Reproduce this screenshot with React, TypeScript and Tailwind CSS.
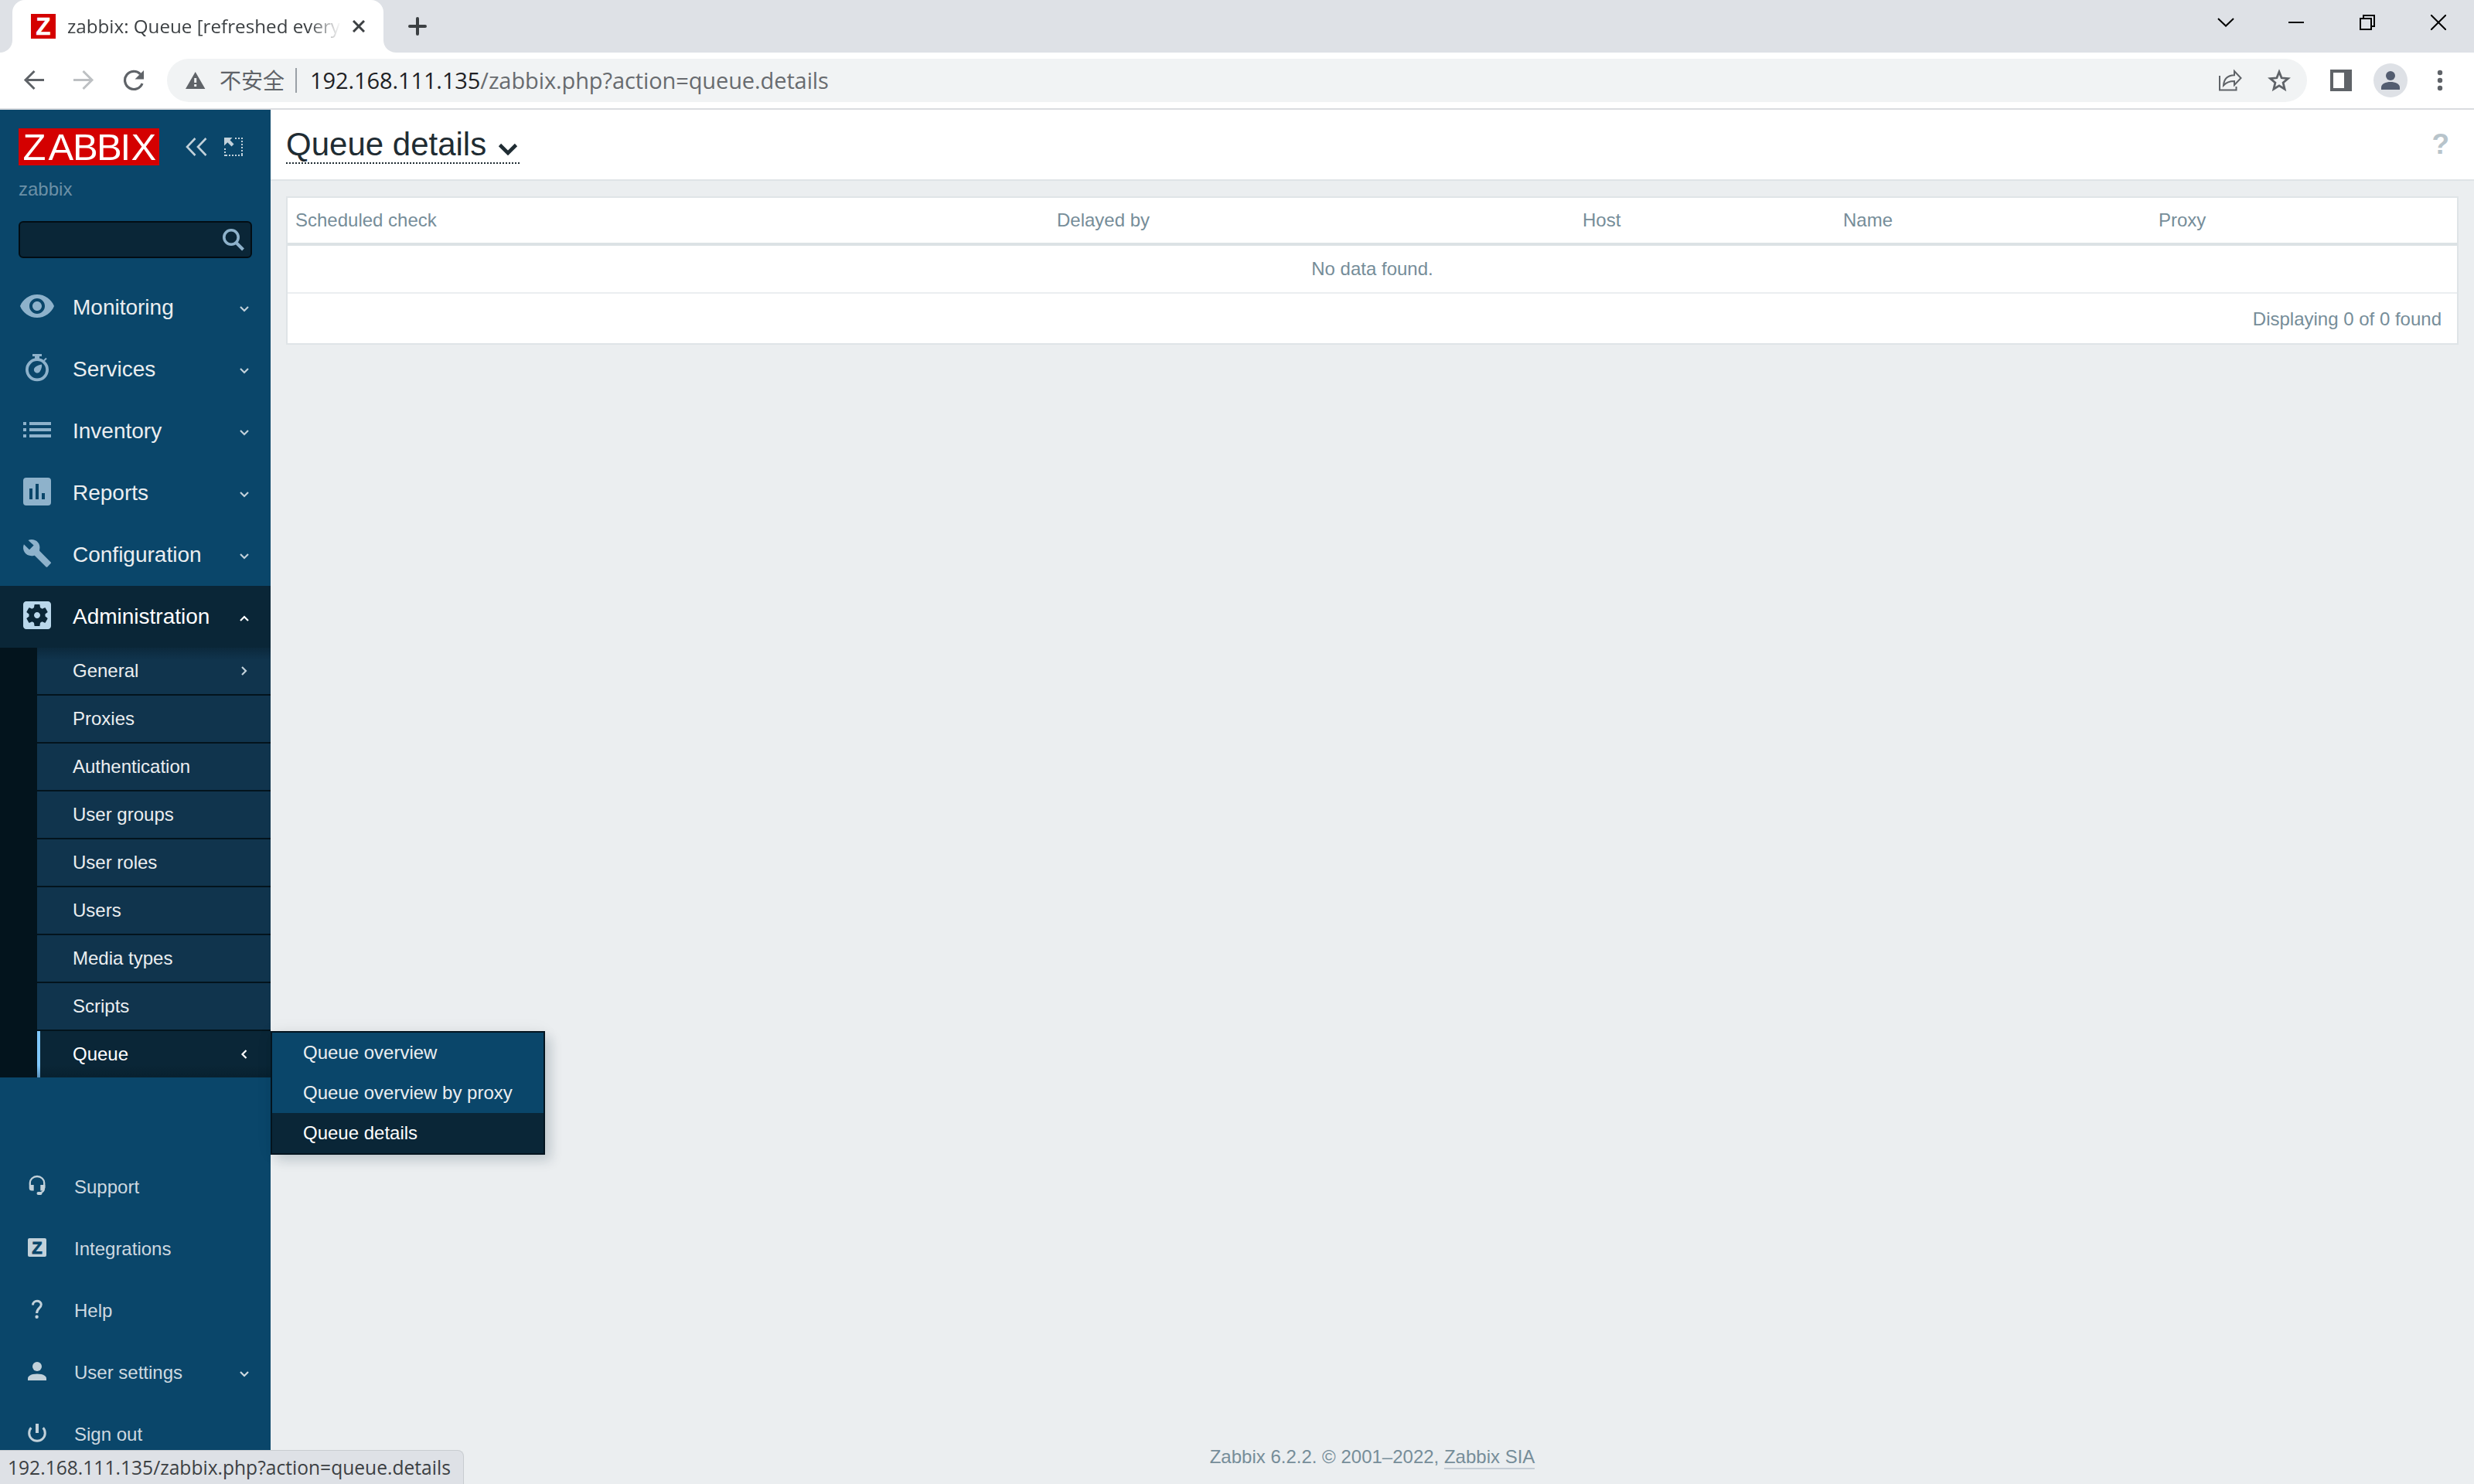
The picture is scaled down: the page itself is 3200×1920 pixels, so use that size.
import type { ReactNode } from "react";

const SEGOE = "font-['Open_Sans','Noto_Sans_CJK_SC',sans-serif]";

/* ---------- icons ---------- */

function Chevron({ dir = "down", className = "" }: { dir?: "down" | "up" | "left" | "right"; className?: string }) {
  const d = {
    down: "M3 6l5 5 5-5",
    up: "M3 11l5-5 5 5",
    right: "M5 3l5 5-5 5",
    left: "M10.500 3l-5 5 5 5",
  }[dir];
  return (
    <svg className={`w-4 h-4 shrink-0 ${className}`} viewBox="0 0 16 16" fill="none" stroke="currentColor" strokeWidth="2.2">
      <path d={d} />
    </svg>
  );
}

function MenuIcon({ children }: { children: ReactNode }) {
  return (
    <svg className="w-12 h-12 mb-1 shrink-0" viewBox="0 0 48 48" fill="currentColor" fillRule="evenodd">
      {children}
    </svg>
  );
}

const icons = {
  monitoring: (
    <path transform="scale(2)" d="M12 4.5C7 4.5 2.73 7.61 1 12c1.73 4.39 6 7.5 11 7.5s9.27-3.11 11-7.5c-1.73-4.39-6-7.5-11-7.5zM12 17c-2.76 0-5-2.24-5-5s2.24-5 5-5 5 2.24 5 5-2.24 5-5 5zm0-8c-1.66 0-3 1.34-3 3s1.34 3 3 3 3-1.34 3-3-1.34-3-3-3z" />
  ),
  services: (
    <>
      <circle cx="24" cy="26.3" r="13.1" fill="none" stroke="currentColor" strokeWidth="3.8" />
      <path d="M18 6h12v3h-3v3.5h-6V9h-3z" />
      <path d="M33 14.5l3-3" fill="none" stroke="currentColor" strokeWidth="2" />
      <path d="M30 19.5c.6 3-.6 6.300-2.300 9a4.200 4.200 0 1 1-6.200-5.400c2.300-1.800 5.200-3.400 8.500-3.600z" />
    </>
  ),
  inventory: <path d="M6 14h4v4H6zM14 14h28v4H14zM6 22h4v4H6zM14 22h28v4H14zM6 30h4v4H6zM14 30h28v4H14z" />,
  reports: (
    <path d="M10 6h28a4 4 0 0 1 4 4v28a4 4 0 0 1-4 4H10a4 4 0 0 1-4-4V10a4 4 0 0 1 4-4zM14 20v14h4V20zM22 14v20h4V14zM30 26v8h4v-8z" />
  ),
  configuration: (
    <path d="M12.500 7C20 3.800 29.500 9.500 27.100 19.500c-.1.600-.1 1.200.3 1.600L41.500 35.200c.7.700.7 1.200 0 1.900l-4.200 4.300c-.6.600-1.100.6-1.700 0L21.300 27.200c-.5-.5-1-.5-1.700-.3C10.500 29 3.500 20.500 6.900 12.300l7.100 6.900 5.600-5.600z" />
  ),
  administration: (
    <path transform="scale(2)" d="M12 10c-1.100 0-2 .9-2 2s.9 2 2 2 2-.9 2-2-.9-2-2-2zm7-7H5c-1.110 0-2 .9-2 2v14c0 1.100.890 2 2 2h14c1.110 0 2-.9 2-2V5c0-1.100-.890-2-2-2zm-1.750 9c0 .230-.020.460-.050.680l1.480 1.160c.130.110.170.300.080.450l-1.400 2.420c-.090.150-.270.210-.430.150l-1.740-.700c-.360.280-.760.510-1.180.690l-.260 1.850c-.030.170-.180.300-.350.300h-2.800c-.170 0-.320-.130-.350-.290l-.260-1.850c-.430-.180-.820-.410-1.180-.690l-1.740.700c-.160.060-.340 0-.430-.150l-1.400-2.420c-.090-.150-.050-.340.080-.450l1.480-1.160c-.030-.230-.050-.460-.050-.690s.020-.460.050-.680l-1.480-1.160c-.130-.110-.170-.300-.080-.450l1.400-2.420c.090-.150.270-.210.430-.150l1.740.700c.360-.280.760-.510 1.180-.690l.260-1.850c.030-.170.180-.300.350-.300h2.800c.170 0 .320.130.350.290l.260 1.850c.430.180.820.410 1.180.690l1.740-.700c.160-.060.340 0 .430.150l1.400 2.420c.090.150.050.340-.080.450l-1.480 1.160c.030.230.050.460.050.690z" />
  ),
  support: (
    <>
      <path d="M14.800 23v-2.500a9.200 8.500 0 0 1 18.400 0V26c0 5-3 7.500-7.500 8" fill="none" stroke="currentColor" strokeWidth="2.300" />
      <path d="M13.700 23h6v7.500h-2.500a3.500 3.500 0 0 1-3.500-3.500zM34.300 23h-6v7.500h3.500l2.500-3.500z" />
      <rect x="23.500" y="32" width="7" height="4" rx="2" />
    </>
  ),
  integrations: (
    <>
      <rect x="12" y="12" width="24" height="24" rx="2" />
      <text x="24" y="31.800" textAnchor="middle" fill="#0a466a" stroke="#0a466a" strokeWidth="0.800" className="font-['Liberation_Sans',sans-serif] text-[22px] font-bold">Z</text>
    </>
  ),
  help: (
    <>
      <path d="M18.500 18.500c0-7 10.800-6.500 10.800-.8 0 4.600-5.700 5-5.700 11.300" fill="none" stroke="currentColor" strokeWidth="3" />
      <circle cx="23.600" cy="33.800" r="2.200" />
    </>
  ),
  user: (
    <>
      <circle cx="24" cy="18" r="6" />
      <path d="M12 36v-2.500c0-3.700 5.500-5.900 12-5.900s12 2.200 12 5.900V36z" />
    </>
  ),
  signout: (
    <>
      <path d="M22 12h4v12h-4z" />
      <path d="M16.300 17.200a10.300 10.300 0 1 0 15.400 0" fill="none" stroke="currentColor" strokeWidth="3" />
    </>
  ),
};

/* ---------- data ---------- */

const mainMenu = [
  { label: "Monitoring", icon: icons.monitoring },
  { label: "Services", icon: icons.services },
  { label: "Inventory", icon: icons.inventory },
  { label: "Reports", icon: icons.reports },
  { label: "Configuration", icon: icons.configuration },
];

const adminMenu = ["General", "Proxies", "Authentication", "User groups", "User roles", "Users", "Media types", "Scripts"];

const bottomMenu = [
  { label: "Support", icon: icons.support },
  { label: "Integrations", icon: icons.integrations },
  { label: "Help", icon: icons.help },
  { label: "User settings", icon: icons.user, arrow: true },
  { label: "Sign out", icon: icons.signout },
];

/* ---------- browser ---------- */

function TabStrip() {
  return (
    <div className="h-[68px] bg-[#dee1e6] flex shrink-0">
      <div className="w-4 bg-white"><div className="h-full bg-[#dee1e6] rounded-br-2xl" /></div>
      <div className="w-[480px] bg-[#dee1e6]">
        <div className="h-full bg-white rounded-t-2xl flex items-center pl-6">
          <svg className="w-8 h-8 shrink-0 overflow-visible" viewBox="0 0 32 32">
            <path fill="#d40000" d="M0 0h32v32H0z" />
            <text x="16" y="26.500" textAnchor="middle" fill="#fff" stroke="#fff" strokeWidth="0.600" className="font-['Liberation_Sans',sans-serif] text-[31px] font-bold">Z</text>
          </svg>
          <div className={`ml-[15px] w-[354px] whitespace-nowrap text-[24.2px] leading-9 text-[#3c4043] ${SEGOE} [mask-image:linear-gradient(to_right,#000_312px,transparent_354px)]`}>
            zabbix: Queue [refreshed every
          </div>
          <svg className="w-4 h-4 ml-[15px] shrink-0" viewBox="0 0 16 16" stroke="#3c4043" strokeWidth="3">
            <path d="M1 1l14 14M15 1L1 15" />
          </svg>
        </div>
      </div>
      <div className="w-4 bg-white"><div className="h-full bg-[#dee1e6] rounded-bl-2xl" /></div>
      <svg className="w-6 h-6 ml-4 mt-[22px]" viewBox="0 0 24 24" stroke="#3c4043" strokeWidth="4" strokeLinecap="round">
        <path d="M12 2v20M2 12h20" />
      </svg>
      <div className="ml-auto mr-9 flex gap-[72px] mt-[19px]">
        <svg className="w-5 h-5 overflow-visible" viewBox="0 0 20 20" fill="none" stroke="#000" strokeWidth="2"><path d="M1 5l10 9.500L21 5" /></svg>
        <svg className="w-5 h-5" viewBox="0 0 20 20"><path d="M0 9h20v2H0z" /></svg>
        <svg className="w-5 h-5" viewBox="0 0 20 20" fill="none" stroke="#000" strokeWidth="2"><path d="M1 5h14v14H1zM5 5V1h14v14h-4" /></svg>
        <svg className="w-5 h-5" viewBox="0 0 20 20" stroke="#000" strokeWidth="2"><path d="M0 0l20 20M20 0L0 20" /></svg>
      </div>
    </div>
  );
}

function Toolbar() {
  return (
    <div className="h-[74px] bg-white border-b-2 border-[#dadce0] flex items-center shrink-0">
      <svg className="w-7 h-7 ml-[30px]" viewBox="0 0 28 28" fill="none" stroke="#5f6368" strokeWidth="3">
        <path d="M27 13.500H3M14.500 2L3 13.500 14.500 25" />
      </svg>
      <svg className="w-7 h-7 ml-9" viewBox="0 0 28 28" fill="none" stroke="#bdc0c3" strokeWidth="3">
        <path d="M1 13.500h24M13.500 2L25 13.500 13.500 25" />
      </svg>
      <svg className="w-7 h-7 ml-[37px]" viewBox="0 0 28 28" fill="none" stroke="#5f6368" strokeWidth="3.200">
        <path d="M22.500 5.800A11.600 11.600 0 1 0 25 18" />
        <path d="M27 1v11.500H15.500z" fill="#5f6368" stroke="none" />
      </svg>
      <div className={`ml-[29px] w-[2768px] h-14 rounded-full bg-[#f1f3f4] flex items-center pl-6 ${SEGOE}`}>
        <svg className="w-[26px] h-[22px] shrink-0" viewBox="0 0 26 22" fill="#5f6368" fillRule="evenodd">
          <path d="M12.700 0L25.400 22H0zM11.200 8v6h3V8zM11.200 16v3h3v-3z" />
        </svg>
        <div className="ml-[18px] w-[98px] text-[28px] leading-10 text-[#5f6368] whitespace-nowrap">不安全</div>
        <div className="w-0.5 h-8 bg-[#9aa0a6]" />
        <div className="ml-[17px] text-[29px] leading-10 tracking-[-0.1px] text-[#202124] whitespace-nowrap">
          192.168.111.135<span className="text-[#686b6f]">/zabbix.php?action=queue.details</span>
        </div>
        <div className="ml-auto mr-5 flex items-center gap-8">
          <svg className="w-8 h-8" viewBox="0 0 32 32" fill="none" stroke="#5f6368" strokeWidth="2">
            <path d="M3 10v18.500h21.500V24" />
            <path d="M8 22.500c.5-8.500 5.500-13 14-13.300V4l8.500 9-8.500 9v-5c-6 0-10 1-14 5.500z" />
          </svg>
          <svg className="w-8 h-8" viewBox="0 0 32 32" fill="none" stroke="#5f6368" strokeWidth="2.800">
            <path d="M16 5l3.100 7.800 8.400.7-6.400 5.500 2 8.200L16 22.800l-7.100 4.400 2-8.200-6.400-5.500 8.400-.7z" />
          </svg>
        </div>
      </div>
      <svg className="w-7 h-7 ml-[30px]" viewBox="0 0 28 28" fill="#5f6368" fillRule="evenodd"><path d="M0 0h28v28H0zM4 4v20h14V4z" /></svg>
      <svg className="w-11 h-11 ml-7" viewBox="0 0 44 44" fill="#535d70">
        <circle cx="22" cy="22" r="22" fill="#dee1e6" />
        <circle cx="22" cy="16" r="6" />
        <path d="M10 34v-3c0-4.500 6-7 12-7s12 2.500 12 7v3z" />
      </svg>
      <svg className="w-2 h-7 ml-[38px]" viewBox="0 0 8 28" fill="#5f6368">
        <circle cx="4" cy="4" r="3.200" /><circle cx="4" cy="14" r="3.200" /><circle cx="4" cy="24" r="3.200" />
      </svg>
    </div>
  );
}

/* ---------- zabbix ---------- */

function SidebarHeader() {
  return (
    <div className="h-[216px] px-6 pt-6 shrink-0">
      <div className="flex items-center">
        <svg className="w-[182px] h-12 overflow-visible" viewBox="0 0 182 48">
          <path fill="#d40000" d="M0 0h182v48H0z" />
          <text x="5.500 38.500 70 101 131.500 145.500" y="41" fill="#fff" className="font-['Liberation_Sans',sans-serif] text-[49px]">ZABBIX</text>
        </svg>
        <svg className="w-7 h-6 ml-[34px]" viewBox="0 0 28 24" fill="none" stroke="#c2d1da" strokeWidth="2.600">
          <path d="M12.500 1L2 12l10.500 11M26.500 1L16 12l10.500 11" />
        </svg>
        <svg className="w-6 h-6 ml-[22px]" viewBox="0 0 24 24" fill="#c2d1da">
          <path d="M0 0h10.500L7.500 3.200l5 5.200-3 3-5.200-5.200L0 10.500z" />
          <path d="M14 0h2v2h-2zM18 0h2v2h-2zM22 0h2v2h-2zM22 4h2v2h-2zM22 8h2v2h-2zM22 12h2v2h-2zM22 16h2v2h-2zM22 20h2v4h-2zM18 22h2v2h-2zM14 22h2v2h-2zM10 22h2v2h-2zM6 22h2v2H6zM2 22h2v2H2zM0 14h2v2H0zM0 18h2v2H0zM0 22h2v2H0z" />
        </svg>
      </div>
      <div className="mt-[17px] text-2xl leading-7 text-[#6c90a6]">zabbix</div>
      <div className="mt-[27px] w-[302px] h-12 rounded-md border-2 border-[#020d14] bg-[#0a2637] flex items-center justify-end pr-[7px]">
        <svg className="w-[30px] h-[30px]" viewBox="0 0 30 30" fill="none" stroke="#8eb2cb">
          <circle cx="12" cy="12" r="9.200" strokeWidth="3.600" />
          <path d="M19 19.500l8.500 8.500" strokeWidth="4" />
        </svg>
      </div>
    </div>
  );
}

function Submenu() {
  const items = ["Queue overview", "Queue overview by proxy", "Queue details"];
  return (
    <div className="absolute left-[298px] top-0 z-10 w-[355px] border-2 border-[#03141f] bg-[#0a466a] text-[#ebeef0] shadow-[8px_8px_14px_rgba(10,40,60,0.15),0_0_20px_rgba(0,0,0,0.06)]">
      {items.map(item => (
        <div
          key={item}
          className={`h-[52px] leading-[52px] pl-10 whitespace-nowrap ${item === "Queue details" ? "bg-[#0a2637] text-white" : ""}`}
        >
          {item}
        </div>
      ))}
    </div>
  );
}

function Sidebar() {
  return (
    <aside className="w-[350px] bg-[#0a466a] flex flex-col shrink-0 text-[#ebeef0]">
      <SidebarHeader />
      <nav className="text-[28px]">
        {mainMenu.map(item => (
          <div key={item.label} className="h-20 flex items-center pl-6 pr-[26px]">
            <span className="flex text-[#8eb2cb]"><MenuIcon>{item.icon}</MenuIcon></span>
            <span className="ml-[22px] flex-1">{item.label}</span>
            <Chevron className="mt-0.5 text-[#c2d1da]" />
          </div>
        ))}
        <div className="h-20 flex items-center pl-6 pr-[26px] bg-[#0a2637] text-white">
          <span className="flex text-[#b9d7eb]"><MenuIcon>{icons.administration}</MenuIcon></span>
          <span className="ml-[22px] flex-1">Administration</span>
          <Chevron dir="up" className="mt-1" />
        </div>
      </nav>
      <div className="pl-12 bg-[#03141d] text-2xl relative">
        {adminMenu.map(label => (
          <div key={label} className="h-[62px] border-b-2 border-[#03141d] bg-[#10344d] flex items-center pl-[46px] pr-[26px]">
            <span className="flex-1">{label}</span>
            {label === "General" && <Chevron dir="right" className="text-[#c2d1da]" />}
          </div>
        ))}
        <div className="relative h-[60px] bg-[#0a2637] border-l-4 border-[#80c8fd] flex items-center pl-[42px] pr-[26px] text-white">
          <span className="flex-1">Queue</span>
          <Chevron dir="left" />
          <Submenu />
        </div>
        {/* soft edges of the expanded section */}
        <div className="absolute inset-x-0 top-0 h-4 bg-linear-to-b from-[#03141d]/35 to-transparent" />
        <div className="absolute left-0 w-[350px] bottom-0 h-4 bg-linear-to-t from-[#03141d]/30 to-transparent" />
      </div>
      <div className="mt-[102px] text-2xl text-[#ced9e0]">
        {bottomMenu.map(item => (
          <div key={item.label} className="h-20 flex items-center pl-6 pr-[26px]">
            <span className="flex text-[#c2d1da]"><MenuIcon>{item.icon}</MenuIcon></span>
            <span className="ml-6 flex-1">{item.label}</span>
            {item.arrow && <Chevron className="mt-0.5" />}
          </div>
        ))}
      </div>
    </aside>
  );
}

function QueueTable() {
  return (
    <div className="mx-5 mt-5 bg-white border-2 border-[#dfe4e7] text-2xl text-[#768d99]">
      <div className="h-[62px] border-b-4 border-[#dce2e5] grid grid-cols-[985px_680px_337px_408px_1fr] items-center *:pl-2.5">
        <div>Scheduled check</div>
        <div>Delayed by</div>
        <div>Host</div>
        <div>Name</div>
        <div>Proxy</div>
      </div>
      <div className="h-[62px] border-b-2 border-[#ebeef0] flex items-center justify-center">No data found.</div>
      <div className="h-16 flex items-center justify-end pr-5 pt-0.5">Displaying 0 of 0 found</div>
    </div>
  );
}

export default function App() {
  return (
    <div className="relative w-[3200px] h-[1920px] overflow-hidden flex flex-col bg-[#ebeef0] font-['Liberation_Sans',Arial,sans-serif]">
      <TabStrip />
      <Toolbar />
      <div className="flex-1 min-h-0 flex">
        <Sidebar />
        <main className="flex-1 flex flex-col">
          <header className="h-[92px] bg-white border-b-2 border-[#dfe4e7] flex justify-between pl-5 pr-8">
            <h1 className="mt-5 h-[50px] w-[302px] flex text-[42px] leading-[50px] text-[#1f2c33] whitespace-nowrap bg-[repeating-linear-gradient(to_right,#1f2c33_0_2px,transparent_2px_4px)] bg-[length:100%_2px] bg-bottom bg-no-repeat">
              Queue details
              <svg className="w-[26px] h-4 ml-auto mr-0.5 mt-[23px]" viewBox="0 0 26 16" fill="none" stroke="#1f2c33" strokeWidth="4.600">
                <path d="M2.500 2.500L13 13 23.500 2.500" />
              </svg>
            </h1>
            <span className="mt-[22px] text-[37px] leading-[46px] font-bold text-[#b8c4cb]">?</span>
          </header>
          <QueueTable />
          <footer className="mt-auto mb-[19px] text-center text-2xl leading-[30px] text-[#768d99]">
            Zabbix 6.2.2. © 2001–2022, <span className="inline-block h-[31px] border-b-2 border-[#c4ccd4]">Zabbix SIA</span>
          </footer>
        </main>
      </div>
      <div className={`absolute left-0 bottom-0 w-[600px] h-11 rounded-tr-lg border-t border-r border-[#c8ccd0] bg-[#dee1e6] pl-2.5 leading-[43px] text-[24.6px] text-[#3c4043] whitespace-nowrap ${SEGOE}`}>
        192.168.111.135/zabbix.php?action=queue.details
      </div>
    </div>
  );
}
